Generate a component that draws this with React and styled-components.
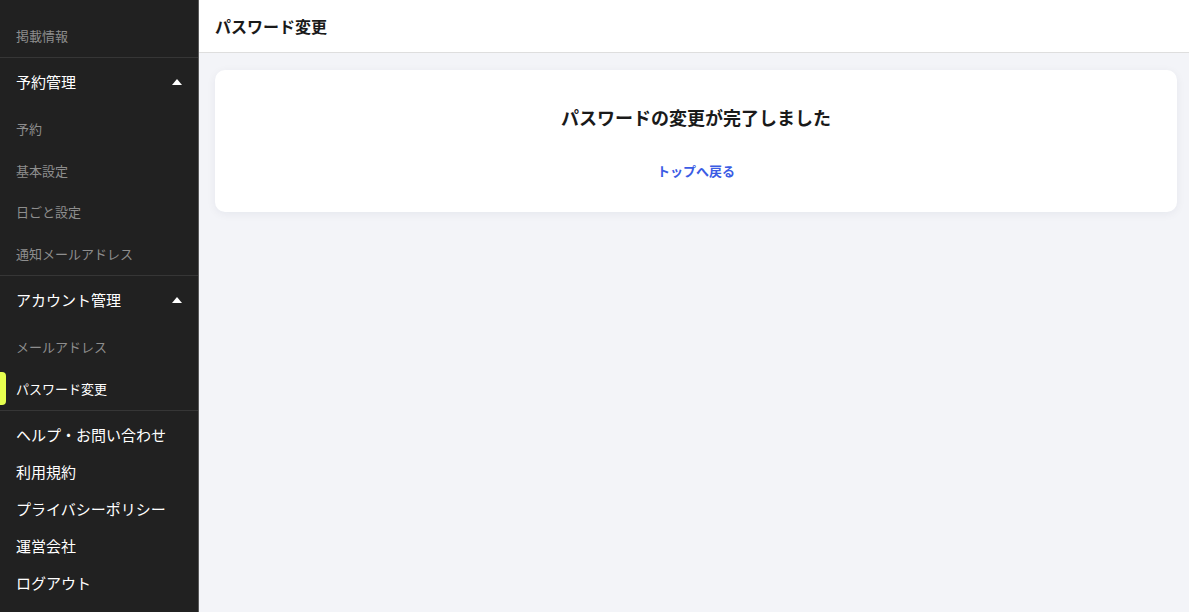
import React from 'react';
import styled, { createGlobalStyle } from 'styled-components';

const GlobalStyle = createGlobalStyle`
  html, body {
    margin: 0;
    padding: 0;
    height: 100%;
  }
  body {
    font-family: "Noto Sans CJK JP", "Noto Sans", sans-serif;
    background: #f3f4f8;
    -webkit-font-smoothing: antialiased;
  }
  #root {
    height: 100%;
  }
`;

const Layout = styled.div`
  display: flex;
  height: 612px;
  overflow: hidden;
`;

const Sidebar = styled.nav`
  width: 198px;
  flex-shrink: 0;
  background: #212121;
  display: flex;
  flex-direction: column;
  padding-top: 15px;
`;

const Section = styled.div`
  display: flex;
  flex-direction: column;
  border-bottom: 1px solid #363636;
`;

const GroupHead = styled.div`
  display: flex;
  align-items: center;
  justify-content: space-between;
  box-sizing: border-box;
  height: 51px;
  padding: 0 16px 3px 16px;
  color: #ffffff;
  font-size: 15px;
`;

const Caret = styled.span`
  width: 0;
  height: 0;
  border-left: 5px solid transparent;
  border-right: 5px solid transparent;
  border-bottom: 6px solid #ffffff;
`;

const SubItem = styled.a`
  position: relative;
  display: flex;
  align-items: center;
  box-sizing: border-box;
  height: 41.5px;
  padding: 0 0 1px 16px;
  font-size: 13px;
  color: ${(p) => (p.$active ? '#ffffff' : '#8e8e8e')};
  text-decoration: none;
  cursor: pointer;

  &::before {
    content: '';
    display: ${(p) => (p.$active ? 'block' : 'none')};
    position: absolute;
    left: 0;
    top: 4px;
    width: 6px;
    height: 33px;
    background: #e6ff4f;
    border-radius: 0 4px 4px 0;
  }
`;

const FooterLinks = styled.div`
  display: flex;
  flex-direction: column;
  padding-top: 5px;
`;

const FooterLink = styled.a`
  display: flex;
  align-items: center;
  height: 37px;
  padding-left: 16px;
  font-size: 15px;
  color: #ffffff;
  text-decoration: none;
`;

const Main = styled.main`
  flex: 1;
  display: flex;
  flex-direction: column;
  background: #f3f4f8;
  border-left: 1px solid #5a5a5a;
`;

const Header = styled.header`
  height: 52px;
  display: flex;
  align-items: center;
  padding-left: 16px;
  background: #ffffff;
  border-bottom: 1px solid #dedede;
  font-size: 16px;
  font-weight: 700;
  color: #1a1a1a;
`;

const Content = styled.div`
  padding: 17px 12px 0 16px;
`;

const Card = styled.section`
  background: #ffffff;
  border-radius: 10px;
  box-shadow: 0 2px 10px rgba(20, 30, 60, 0.06);
  height: 142px;
  display: flex;
  flex-direction: column;
  align-items: center;
  padding-top: 34px;
  box-sizing: border-box;
`;

const CardTitle = styled.h2`
  margin: 0;
  font-size: 18px;
  font-weight: 700;
  color: #1a1a1a;
  line-height: 26px;
`;

const BackLink = styled.a`
  margin-top: 31px;
  font-size: 13px;
  font-weight: 700;
  color: #3b5ce4;
  text-decoration: none;
  cursor: pointer;
`;

const groups = [
  {
    title: '予約管理',
    items: ['予約', '基本設定', '日ごと設定', '通知メールアドレス'],
  },
  {
    title: 'アカウント管理',
    items: ['メールアドレス', 'パスワード変更'],
    active: 'パスワード変更',
  },
];

const footer = ['ヘルプ・お問い合わせ', '利用規約', 'プライバシーポリシー', '運営会社', 'ログアウト'];

const App = () => (
  <>
    <GlobalStyle />
    <Layout>
      <Sidebar>
        <Section>
          <SubItem>掲載情報</SubItem>
        </Section>
        {groups.map((g) => (
          <Section key={g.title}>
            <GroupHead>
              {g.title}
              <Caret />
            </GroupHead>
            {g.items.map((item) => (
              <SubItem key={item} $active={item === g.active}>
                {item}
              </SubItem>
            ))}
          </Section>
        ))}
        <FooterLinks>
          {footer.map((f) => (
            <FooterLink key={f}>{f}</FooterLink>
          ))}
        </FooterLinks>
      </Sidebar>
      <Main>
        <Header>パスワード変更</Header>
        <Content>
          <Card>
            <CardTitle>パスワードの変更が完了しました</CardTitle>
            <BackLink>トップへ戻る</BackLink>
          </Card>
        </Content>
      </Main>
    </Layout>
  </>
);

export default App;
